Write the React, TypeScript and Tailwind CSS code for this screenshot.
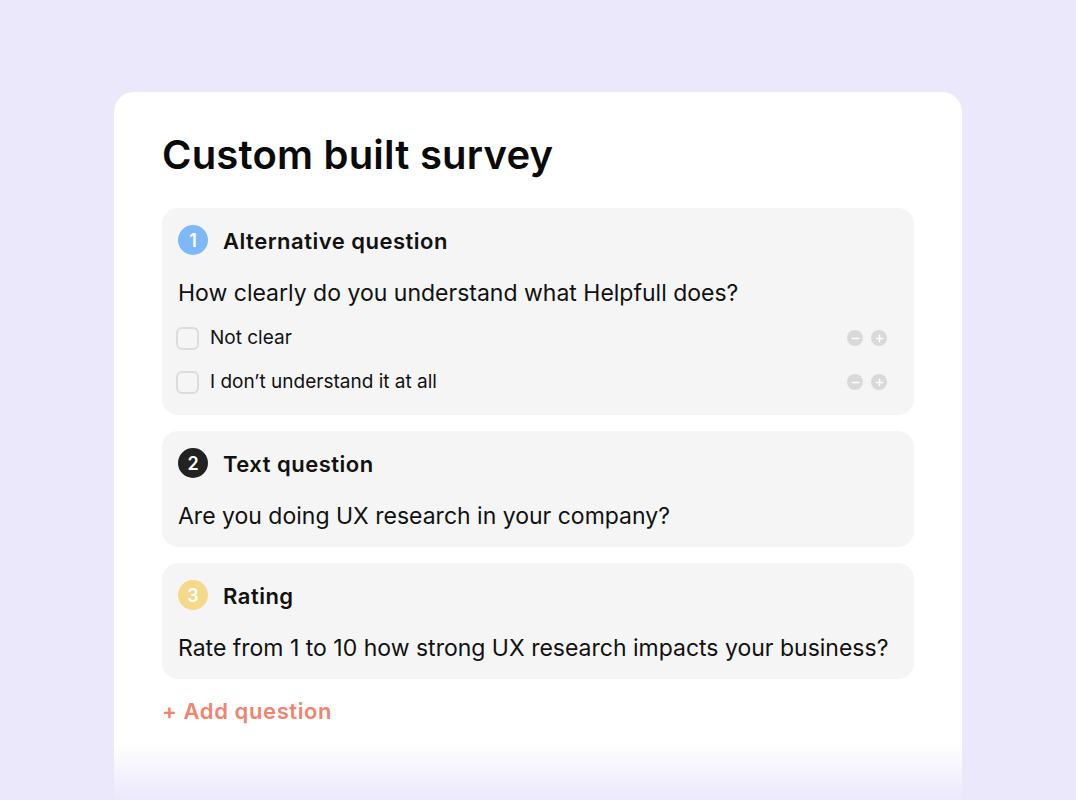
import { Minus, Plus } from 'lucide-react';

type Question = {
  n: number;
  badge: string;
  title: string;
  text: string;
  options?: string[];
};

const QUESTIONS: Question[] = [
  {
    n: 1,
    badge: 'bg-[#7db8f7]',
    title: 'Alternative question',
    text: 'How clearly do you understand what Helpfull does?',
    options: ['Not clear', 'I don’t understand it at all'],
  },
  {
    n: 2,
    badge: 'bg-[#222222]',
    title: 'Text question',
    text: 'Are you doing UX research in your company?',
  },
  {
    n: 3,
    badge: 'bg-[#f5d98b]',
    title: 'Rating',
    text: 'Rate from 1 to 10 how strong UX research impacts your business?',
  },
];

function RoundIcon({ plus }: { plus?: boolean }) {
  return (
    <span className="flex h-4 w-4 items-center justify-center rounded-full bg-[#d9d9d9] text-white">
      {plus ? <Plus size={11} strokeWidth={3} /> : <Minus size={11} strokeWidth={3} />}
    </span>
  );
}

function QuestionCard({ q }: { q: Question }) {
  return (
    <div className={`flex flex-col rounded-2xl bg-[#f5f5f5] px-4 pt-4 ${q.options ? 'pb-[17px]' : 'pb-[15px]'}`}>
      {/* Header */}
      <div className="flex h-8 items-center gap-[15px]">
        <span
          className={`flex h-[30px] w-[30px] items-center justify-center rounded-full text-[18px] font-semibold text-white ${q.badge}`}
        >
          {q.n}
        </span>
        <span className="pt-0.5 text-[22px] font-semibold leading-8 tracking-[0.5px] text-[#111]">{q.title}</span>
      </div>

      <p className="mt-[21px] whitespace-nowrap text-[23px] leading-8 text-[#111]">{q.text}</p>

      {q.options && (
        <div className="mt-[13px] flex flex-col gap-3">
          {q.options.map((opt) => (
            <div key={opt} className="flex h-8 items-center">
              <span className="-ml-[2px] h-[23px] w-[23px] rounded-[6px] border-2 border-[#dcdcdc]" />
              <span className="ml-[11px] flex-1 text-[19px] text-[#111]">{opt}</span>
              <div className="mr-[11px] flex items-center gap-2">
                <RoundIcon />
                <RoundIcon plus />
              </div>
            </div>
          ))}
        </div>
      )}
    </div>
  );
}

export default function App() {
  return (
    <div
      className="flex h-[800px] justify-center overflow-hidden bg-[#ebe8fb] pt-[92px]"
      style={{ fontFamily: 'Inter, "Noto Sans", sans-serif' }}
    >
      <div className="flex w-[848px] flex-col rounded-t-[20px] bg-white">
        <div className="flex flex-col px-12 pt-[39px]">
          <h1 className="mb-[2px] text-[40px] font-semibold leading-[48px] tracking-[0.2px] text-[#0a0a0a]">
            Custom built survey
          </h1>

          <div className="mt-[27px] flex flex-col gap-[16px]">
            {QUESTIONS.map((q) => (
              <QuestionCard key={q.n} q={q} />
            ))}
          </div>

          <button className="mt-[16px] self-start text-[22px] font-semibold leading-8 tracking-[0.6px] text-[#f2846f]">
            + Add question
          </button>
        </div>

        {/* Fade out */}
        <div className="flex-1 bg-[linear-gradient(to_bottom,#ffffff_22%,#ebe8fb)]" />
      </div>
    </div>
  );
}
